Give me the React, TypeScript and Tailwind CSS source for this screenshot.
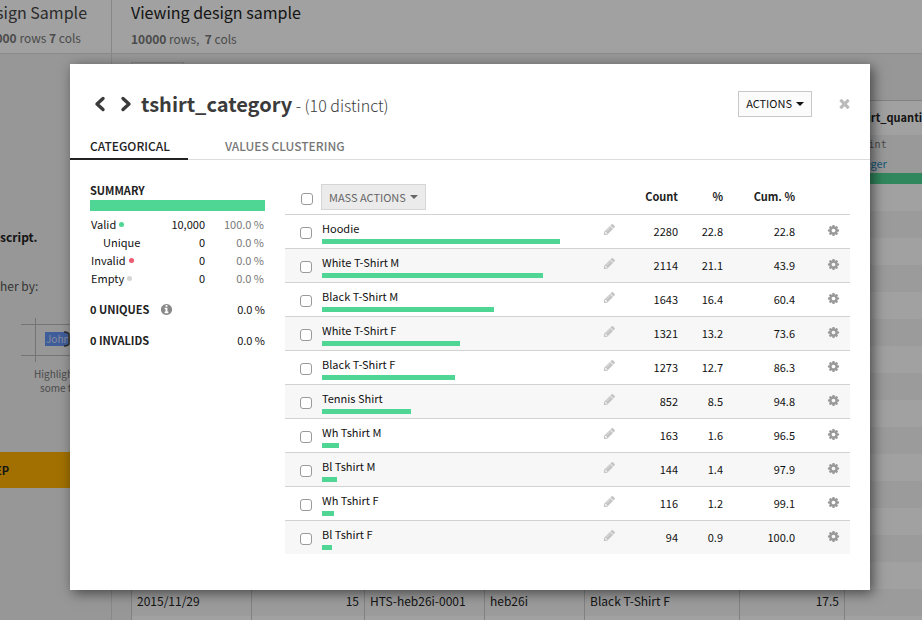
import type { ReactNode } from "react";

const categories = [
  { name: "Hoodie", count: 2280, pct: "22.8", cum: "22.8" },
  { name: "White T-Shirt M", count: 2114, pct: "21.1", cum: "43.9" },
  { name: "Black T-Shirt M", count: 1643, pct: "16.4", cum: "60.4" },
  { name: "White T-Shirt F", count: 1321, pct: "13.2", cum: "73.6" },
  { name: "Black T-Shirt F", count: 1273, pct: "12.7", cum: "86.3" },
  { name: "Tennis Shirt", count: 852, pct: "8.5", cum: "94.8" },
  { name: "Wh Tshirt M", count: 163, pct: "1.6", cum: "96.5" },
  { name: "Bl Tshirt M", count: 144, pct: "1.4", cum: "97.9" },
  { name: "Wh Tshirt F", count: 116, pct: "1.2", cum: "99.1" },
  { name: "Bl Tshirt F", count: 94, pct: "0.9", cum: "100.0" },
];
const maxCount = 2280;

const summary = [
  { label: "Valid", dot: "bg-[#4fd694]", value: "10,000", pct: "100.0 %" },
  { label: "Unique", dot: "", value: "0", pct: "0.0 %" },
  { label: "Invalid", dot: "bg-[#ee5a6f]", value: "0", pct: "0.0 %" },
  { label: "Empty", dot: "bg-[#d5d5d5]", value: "0", pct: "0.0 %" },
];

const sampleRow = ["2015/11/29", "15", "HTS-heb26i-0001", "heb26i", "Black T-Shirt F", "17.5", ""];
const leadingRows = Array.from({ length: 15 }, (_, i) => i);

function Glyph({ d, className }: { d: string; className: string }) {
  return (
    <svg viewBox="0 0 1792 1792" fill="currentColor" aria-hidden="true" className={className}>
      <path d={d} />
    </svg>
  );
}

const COG =
  "M1152 896q0-106-75-181t-181-75-181 75-75 181 75 181 181 75 181-75 75-181zm512-109v222q0 12-8 23t-20 13l-185 28q-19 54-39 91 35 50 107 138 10 12 10 25t-9 23q-27 37-99 108t-94 71q-12 0-26-9l-138-108q-44 23-91 38-16 136-29 186-7 28-36 28h-222q-14 0-24.5-8.5t-11.5-21.5l-28-184q-49-16-90-37l-141 107q-10 9-25 9-14 0-25-11-126-114-165-168-7-10-7-23 0-12 8-23 15-21 51-66.5t54-70.5q-27-50-41-99l-183-27q-13-2-21-12.5t-8-23.5v-222q0-12 8-23t19-13l186-28q14-46 39-92-40-57-107-138-10-12-10-24 0-10 9-23 26-36 98.5-107.5t94.5-71.5q13 0 26 10l138 107q44-23 91-38 16-136 29-186 7-28 36-28h222q14 0 24.5 8.5t11.5 21.5l28 184q49 16 90 37l142-107q9-9 24-9 13 0 25 10 129 119 165 170 7 8 7 22 0 12-8 23-15 21-51 66.5t-54 70.5q26 50 41 98l183 28q13 2 21 12.5t8 23.5z";
const PENCIL =
  "M491 1536l91-91-235-235-91 91v107h128v128h107zm523-928q0-22-22-22-10 0-17 7l-542 542q-7 7-7 17 0 22 22 22 10 0 17-7l542-542q7-7 7-17zm-54-192l416 416-832 832h-416v-416zm683 96q0 53-37 90l-166 166-416-416 166-165q36-38 90-38 53 0 91 38l235 234q37 39 37 91z";
const INFO =
  "M1152 1376v-160q0-14-9-23t-23-9h-96v-512q0-14-9-23t-23-9h-320q-14 0-23 9t-9 23v160q0 14 9 23t23 9h96v320h-96q-14 0-23 9t-9 23v160q0 14 9 23t23 9h448q14 0 23-9t9-23zm-128-896v-160q0-14-9-23t-23-9h-192q-14 0-23 9t-9 23v160q0 14 9 23t23 9h192q14 0 23-9t9-23zm640 416q0 209-103 385.5t-279.5 279.5-385.5 103-385.5-103-279.5-279.5-103-385.5 103-385.5 279.5-279.5 385.5-103 385.5 103 279.5 279.5 103 385.5z";
const TIMES =
  "M1490 1322q0 40-28 68l-136 136q-28 28-68 28t-68-28l-294-294-294 294q-28 28-68 28t-68-28l-136-136q-28-28-28-68t28-68l294-294-294-294q-28-28-28-68t28-68l136-136q28-28 68-28t68 28l294 294 294-294q28-28 68-28t68 28l136 136q28 28 28 68t-28 68l-294 294 294 294q28 28 28 68z";

function Caret() {
  return (
    <svg viewBox="0 0 8 4" fill="currentColor" aria-hidden="true" className="h-1 w-2">
      <path d="M0 0h8L4 4z" />
    </svg>
  );
}

function Chevron({ d, label }: { d: string; label: string }) {
  return (
    <button type="button" aria-label={label} className="text-[#3b3b3b]">
      <svg viewBox="0 0 12 16" fill="none" stroke="currentColor" strokeWidth="3.4" strokeLinecap="round" strokeLinejoin="round" className="h-4 w-3">
        <path d={d} />
      </svg>
    </button>
  );
}

function Check({ label }: { label: string }) {
  return (
    <input
      type="checkbox"
      aria-label={label}
      className="block size-3 appearance-none rounded-[3px] border border-[#9a9a9a] bg-white checked:bg-[#4fd694]"
    />
  );
}

function StatLine({ title, children }: { title: string; children?: ReactNode }) {
  return (
    <div className="flex items-center gap-[11px] font-bold text-[#222]">
      <h3>{title}</h3>
      {children}
      <span className="ml-auto font-normal text-[#111]">0.0 %</span>
    </div>
  );
}

function ScriptPanel() {
  return (
    <aside className="flex w-28 shrink-0 flex-col overflow-hidden border-r border-[#d8d8d8] bg-[#f0f0f0] whitespace-nowrap">
      <header className="flex h-[54px] flex-col items-end border-b border-[#dcdcdc] bg-white pr-6 text-[#444]">
        <h2 className="text-base leading-6">sign Sample</h2>
        <p className="pr-[6px] text-xs leading-7 text-[#777]">
          <b>000</b> rows <b>7</b> cols
        </p>
      </header>
      <p className="mt-[173px] text-xs leading-5 font-bold text-[#222]">script.</p>
      <p className="mt-[29px] text-xs leading-5 text-[#555]">her by:</p>
      <svg viewBox="0 0 90 44" aria-hidden="true" className="mt-[22px] ml-[21px] h-11 w-[90px] shrink-0">
        <path d="M0 6.5h90M0 37.5h90M14.500 0v44" stroke="#b8b8b8" fill="none" />
        <rect x="24" y="14" width="23" height="14" fill="#6593f5" />
        <text x="25" y="25" className="fill-[#d5def5] text-[10px]">John</text>
        <path d="M43 14q5 0 5 3v8q0 3-5 3" stroke="#444" strokeWidth="1.500" fill="none" />
      </svg>
      <p className="mt-[5px] ml-[34px] text-[10px] leading-[14px] text-[#777]">
        <span className="block">Highlight</span>
        <span className="block pl-[6px]">some text</span>
      </p>
      <button type="button" className="mt-[57px] h-9 w-20 shrink-0 bg-[#ffb200] text-[11px] font-bold text-[#222]">
        <span className="flex w-[9px] justify-end">EP</span>
      </button>
    </aside>
  );
}

function DataPanel() {
  return (
    <main className="flex min-w-0 flex-1 flex-col overflow-hidden bg-[#f0f0f0]">
      <header className="h-[54px] shrink-0 border-b border-[#dcdcdc] bg-white pl-[19px]">
        <h1 className="text-base leading-6 text-[#222]">Viewing design sample</h1>
        <p className="text-xs leading-[30px] text-[#777]">
          <b>10000</b> rows, &nbsp;<b>7</b> cols
        </p>
      </header>
      <div className="mt-2 ml-[19px] h-[38px] w-[53px] shrink-0 border border-b-0 border-[#d0d0d0]" />
      <table className="ml-[19px] w-[950px] shrink-0 table-fixed border-collapse border-l border-[#ccc] text-xs text-[#222]">
        <colgroup>
          <col className="w-[120px]" />
          <col className="w-[113px]" />
          <col className="w-[120px]" />
          <col className="w-[100px]" />
          <col className="w-[155px]" />
          <col className="w-[105px]" />
          <col />
        </colgroup>
        <thead>
          <tr className="h-[34px] border-t border-[#ccc] bg-white">
            <td colSpan={6} />
            <th className="pl-[6px] text-left text-[11px]">tshirt_quantity</th>
          </tr>
          <tr className="h-[38px] bg-[#f2f2f2]">
            <td colSpan={6} />
            <td className="pl-[6px] text-[11px] leading-[18px]">
              <span className="block font-['DejaVu_Sans_Mono','Liberation_Mono',monospace] text-[10px] text-[#777]">bigint</span>
              <a href="#integer" className="block text-[#2a8fc4]">Integer</a>
            </td>
          </tr>
          <tr className="h-[11px] bg-[#4fd694]">
            <td colSpan={7} />
          </tr>
        </thead>
        <tbody>
          {leadingRows.map((i) => (
            <tr key={i} className="h-[27px] odd:bg-white even:bg-[#f6f6f6]">
              <td colSpan={7} />
            </tr>
          ))}
          <tr className="h-[27px] bg-[#f6f6f6]">
            {sampleRow.map((v, i) => (
              <td key={i} className="border-r border-[#ccc] px-[5px] pb-[3px] whitespace-nowrap [&:nth-child(2)]:text-right [&:nth-child(6)]:text-right">
                {v}
              </td>
            ))}
          </tr>
          <tr className="h-[27px] bg-white">
            {sampleRow.map((_, i) => (
              <td key={i} className="border-r border-[#ccc]" />
            ))}
          </tr>
        </tbody>
      </table>
    </main>
  );
}

function Summary() {
  return (
    <section className="w-[175px] shrink-0 leading-[18px]">
      <h3 className="font-bold text-[#222]">SUMMARY</h3>
      <div className="mt-px mb-1 h-[11px] bg-[#4fd694]" />
      <table className="w-full">
        <tbody>
          {summary.map((s) => (
            <tr key={s.label}>
              <th scope="row" className={s.dot ? "pl-px text-left font-normal" : "pl-[13px] text-left font-normal"}>
                <span className="flex items-center gap-[3px]">
                  {s.label}
                  {s.dot && <i className={`size-[5px] rounded-full ${s.dot}`} />}
                </span>
              </th>
              <td className="text-right">{s.value}</td>
              <td className="w-[60px] pr-px text-right text-[#777]">{s.pct}</td>
            </tr>
          ))}
        </tbody>
      </table>
      <div className="mt-[13px] flex flex-col gap-[13px]">
        <StatLine title="0 UNIQUES">
          <Glyph d={INFO} className="size-[13px] text-[#888]" />
        </StatLine>
        <StatLine title="0 INVALIDS" />
      </div>
    </section>
  );
}

function CategoryTable() {
  return (
    <table className="min-w-0 flex-1 table-fixed border-collapse">
      <colgroup>
        <col className="w-[37px]" />
        <col />
        <col className="w-[49px]" />
        <col className="w-[44px]" />
        <col className="w-[45px]" />
        <col className="w-[72px]" />
        <col className="w-[55px]" />
      </colgroup>
      <thead>
        <tr className="h-9 align-top font-bold text-[#222]">
          <td className="pt-[15px] pl-4">
            <Check label="Select all" />
          </td>
          <td className="pt-[6px]">
            <button type="button" className="-ml-px flex h-[26px] items-center gap-1 border border-[#d5d5d5] bg-[#ebebeb] px-[7px] font-normal text-[#666]">
              MASS ACTIONS
              <Caret />
            </button>
          </td>
          <td />
          <th scope="col" className="pt-[9px] text-right leading-[18px]">Count</th>
          <th scope="col" className="pt-[9px] text-right leading-[18px]">%</th>
          <th scope="col" className="pt-[9px] text-right leading-[18px]">Cum. %</th>
          <td />
        </tr>
      </thead>
      <tbody>
        {categories.map((c) => (
          <tr key={c.name} className="h-[34px] border-t border-[#d2d2d2] even:bg-[#f7f7f7]">
            <td className="pt-1 pl-[15px]">
              <Check label={c.name} />
            </td>
            <td className="pt-[2px] pr-[25px]">
              <div className="leading-4">{c.name}</div>
              <div className="mt-[3px] h-[5px] bg-[#4fd694]" style={{ width: `${(c.count / maxCount) * 100}%` }} />
            </td>
            <td className="pb-1">
              <button type="button" aria-label={`Rename ${c.name}`} className="ml-[18px] block text-[#c4c4c4]">
                <Glyph d={PENCIL} className="size-[13px]" />
              </button>
            </td>
            <td className="text-right">{c.count}</td>
            <td className="text-right">{c.pct}</td>
            <td className="text-right">{c.cum}</td>
            <td className="pb-px">
              <button type="button" aria-label={`Actions for ${c.name}`} className="ml-8 block text-[#999]">
                <Glyph d={COG} className="size-[13px]" />
              </button>
            </td>
          </tr>
        ))}
      </tbody>
    </table>
  );
}

function CategoryDialog() {
  return (
    <div role="dialog" aria-label="tshirt_category" className="w-full bg-white pb-9 text-[11px] text-[#111] shadow-[3px_3px_12px_rgba(0,0,0,0.55)]">
      <header className="flex h-[69px] items-center pt-[10px] pr-[18px] pl-6">
        <div className="flex items-center gap-[14px]">
          <Chevron d="M9 2.500L3 8l6 5.500" label="Previous column" />
          <Chevron d="M3 2.500L9 8l-6 5.500" label="Next column" />
        </div>
        <h2 className="ml-[9px] text-xl leading-8 text-[#3b3b3b]">
          <b>tshirt_category</b>
          <span className="text-base font-light"> - (10 distinct)</span>
        </h2>
        <button type="button" className="ml-auto flex h-[26px] items-center gap-1 border border-[#c8c8c8] bg-[#fbfbfb] px-[7px]">
          ACTIONS
          <Caret />
        </button>
        <button type="button" aria-label="Close" className="ml-[25px] text-[#bbb]">
          <Glyph d={TIMES} className="size-[15px]" />
        </button>
      </header>
      <nav className="flex h-[27px] gap-[17px] border-b border-[#ddd] text-xs font-medium">
        <a href="#categorical" className="-mb-px border-b-2 border-[#222] pr-[18px] pl-5 leading-[26px] text-[#222]">
          CATEGORICAL
        </a>
        <a href="#clustering" className="px-5 leading-[26px] text-[#777]">
          VALUES CLUSTERING
        </a>
      </nav>
      <div className="flex items-start gap-5 pt-[18px] pr-5 pl-5">
        <div className="pt-[3px]">
          <Summary />
        </div>
        <CategoryTable />
      </div>
    </div>
  );
}

export default function App() {
  return (
    <div className="relative h-screen overflow-hidden font-['Noto_Sans_CJK_SC','Open_Sans',sans-serif]">
      <div className="flex h-full">
        <ScriptPanel />
        <DataPanel />
      </div>
      <div className="absolute inset-0 flex items-start bg-black/37 pt-16 pr-[52px] pl-[70px]">
        <CategoryDialog />
      </div>
    </div>
  );
}
